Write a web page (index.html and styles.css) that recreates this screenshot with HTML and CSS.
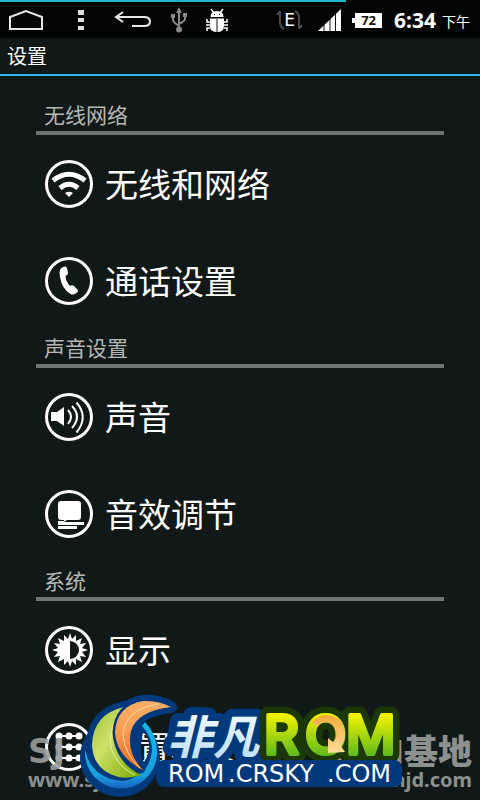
FILE: index.html
```html
<!DOCTYPE html>
<html lang="zh-CN">
<head>
    <meta charset="UTF-8">
    <meta name="viewport" content="width=device-width, initial-scale=1.0">
    <title>设置</title>
    <link rel="stylesheet" href="styles.css">
</head>
<body>
    <div class="progress"></div>
    <div class="status-bar">
        <button class="nav-btn home" aria-label="Home">
            <svg width="36" height="22" viewBox="0 0 36 22"><path d="M2 20V8L18 2l16 6v12z" fill="none" stroke="#e8e8e8" stroke-width="2"/></svg>
        </button>
        <button class="nav-btn menu" aria-label="Menu">
            <svg width="6" height="22" viewBox="0 0 6 22"><path d="M0 1h6v5H0zM0 9h6v4H0zM0 17h6v4H0z" fill="#e0e0e0"/></svg>
        </button>
        <button class="nav-btn back" aria-label="Back">
            <svg width="38" height="18" viewBox="0 0 38 18"><path d="M9 1L2 6l7 5M2 6h28q6 0 6 4.500T30 15H18" fill="none" stroke="#e8e8e8" stroke-width="2"/></svg>
        </button>
        <svg class="usb" width="18" height="26" viewBox="0 0 18 26">
            <g fill="none" stroke="#8a8a8a" stroke-width="2"><path d="M9 5v17M3 10v3q0 2 6 6M15 8v4q0 2-6 5"/></g>
            <path d="M9 0l3 6H6zM1 7h4v4H1zM13 6h4v4h-4z" fill="#8a8a8a"/><circle cx="9" cy="22.500" r="3" fill="#8a8a8a"/>
        </svg>
        <svg class="bug" width="24" height="25" viewBox="0 0 24 25">
            <path d="M5.500 9q0-6 6.500-6t6.500 6zM5 10.500h14v7.500q0 6-7 6t-7-6z" fill="#fff"/>
            <path d="M6 1l3 4M18 1l-3 4M5 14H2v-3M19 14h3v-3M5 17H1M19 17h4M5 20H2v3M19 20h3v3" fill="none" stroke="#fff" stroke-width="1.500"/>
            <path d="M12 11v13" stroke="#111"/><path d="M9 6h1v1H9zM14 6h1v1h-1z" fill="#000"/>
        </svg>
        <div class="spacer"></div>
        <div class="network">
            <svg width="27" height="22" viewBox="0 0 27 22"><g fill="none" stroke="#4c4c4c" stroke-width="2"><path d="M8 20q-4-2-4-7V3M1 6l3-4M19 2q4 2 4 7v10M26 16l-3 4"/></g></svg>
            <span>E</span>
        </div>
        <svg class="signal" width="24" height="22" viewBox="0 0 24 22"><path d="M0 22L23 0v22z" fill="#fff"/><path d="M6 14v8M12 9v13M17.500 4v18" stroke="#111"/></svg>
        <div class="battery">72</div>
        <div class="clock">6:34</div>
        <div class="ampm">下午</div>
    </div>

    <h1>设置</h1>

    <main>
        <section>
            <h2>无线网络</h2>
            <a class="item" href="#wireless">
                <svg class="icon" viewBox="0 0 48 48">
                    <circle class="ring" cx="24" cy="24" r="22.500"/>
                    <path d="M8 20.500Q24 8 40 20.500" class="line w5"/>
                    <path d="M15 28q9-7.500 18 0" class="line w5"/>
                    <path d="M20 33q4-2.500 8 0l-4 4z" class="fill"/>
                </svg>
                <span>无线和网络</span>
            </a>
            <a class="item" href="#call">
                <svg class="icon" viewBox="0 0 48 48">
                    <circle class="ring" cx="24" cy="24" r="22.500"/>
                    <path d="M15 13q1-3 5-3.500 2 0 2.500 3.500l.5 3q0 2-2.500 3 0 5 4.500 10 2-1.500 4 0l3 3q2 2 0 3.500-3 3-6.500 1.500Q17 32 15 20q-1-4 0-7z" class="fill"/>
                </svg>
                <span>通话设置</span>
            </a>
        </section>

        <section>
            <h2>声音设置</h2>
            <a class="item" href="#sound">
                <svg class="icon" viewBox="0 0 48 48">
                    <circle class="ring" cx="24" cy="24" r="22.500"/>
                    <path d="M6 19h6l7-5v19l-7-5H6z" class="fill"/>
                    <path d="M23 17q6 6.500 0 14M27 13q10 10.500 0 22M31.500 9.500q12.500 14.500 0 30" class="line w2"/>
                </svg>
                <span>声音</span>
            </a>
            <a class="item" href="#effects">
                <svg class="icon" viewBox="0 0 48 48">
                    <circle class="ring" cx="24" cy="24" r="22.500"/>
                    <path d="M16 11h17q3 0 3 3v13q0 3-3 3H22l-3 2v-2h-3q-3 0-3-3V14q0-3 3-3z" class="fill"/>
                    <path d="M13 31h6v1h20v3H13zM13 36h19v3H13z" class="fill"/>
                </svg>
                <span>音效调节</span>
            </a>
        </section>

        <section>
            <h2>系统</h2>
            <a class="item" href="#display">
                <svg class="icon" viewBox="0 0 48 48">
                    <circle class="ring" cx="24" cy="24" r="22.500"/>
                    <path d="M25 7l2 6 4-4 0 6 6-3-2 6 6-1-4 5 6 2-6 2 4 5-6-1 2 6-6-3 0 6-4-4-2 6-2-6-4 4 0-6-6 3 2-6-6 1 4-5-6-2 6-2-4-5 6 1-2-6 6 3 0-6 4 4z" class="fill"/>
                    <path d="M25 15a9 9 0 0 1 0 18z" class="cut"/>
                </svg>
                <span>显示</span>
            </a>
            <a class="item" href="#security">
                <svg class="icon" viewBox="0 0 48 48">
                    <circle class="ring" cx="24" cy="24" r="22.500"/>
                    <path d="M35 13H14v11h20M14 24v11h21" class="line w2"/>
                    <g class="fill">
                        <circle cx="14" cy="13" r="3.500"/><circle cx="24" cy="13" r="3.500"/><circle cx="34" cy="13" r="3.500"/>
                        <circle cx="14" cy="24" r="3.500"/><circle cx="24" cy="24" r="3.500"/><circle cx="34" cy="24" r="3.500"/>
                        <circle cx="14" cy="35" r="3.500"/><circle cx="24" cy="35" r="3.500"/><circle cx="34" cy="35" r="3.500"/>
                    </g>
                </svg>
                <span>位置和安全</span>
            </a>
        </section>
    </main>

    <!-- site watermarks over the list -->
    <div class="mark mark-left"><b>SJ</b><span>www.sj.com</span></div>
    <div class="mark mark-right"><b>ROM基地</b><span>www.romjd.com</span></div>

    <svg class="logo" width="330" height="110" viewBox="80 690 330 110">
        <defs>
            <linearGradient id="green" x1="0" y1="0" x2="1" y2="1"><stop offset="0" stop-color="#9cc23a"/><stop offset=".4" stop-color="#cfe069"/><stop offset="1" stop-color="#75a900"/></linearGradient>
            <linearGradient id="orange" x1="0" y1="0" x2="0" y2="1"><stop offset="0" stop-color="#f9ad66"/><stop offset=".4" stop-color="#f8a055"/><stop offset="1" stop-color="#e8661a"/></linearGradient>
            <linearGradient id="blue" x1="0" y1="0" x2="0" y2="1"><stop offset="0" stop-color="#12b5e8"/><stop offset=".8" stop-color="#1aa0dc"/><stop offset="1" stop-color="#1560c0"/></linearGradient>
            <linearGradient id="ice" x1="0" y1="0" x2="0" y2="1"><stop offset="0" stop-color="#fff"/><stop offset="1" stop-color="#b5dcf5"/></linearGradient>
            <linearGradient id="lime" gradientUnits="userSpaceOnUse" x1="0" y1="715" x2="0" y2="758"><stop offset="0" stop-color="#f2f200"/><stop offset="1" stop-color="#55b81e"/></linearGradient>
            <linearGradient id="gold" x1="0" y1="0" x2="0" y2="1"><stop offset="0" stop-color="#f6a93a"/><stop offset="1" stop-color="#ffdc9c"/></linearGradient>
        </defs>
        <g class="han">
            <text x="167" y="754" stroke="#003a7c" stroke-width="16">非凡</text>
            <text x="167" y="754" fill="url(#ice)">非凡</text>
        </g>
        <g class="rom">
            <g stroke="#1c3808" stroke-width="17"><text x="264" y="754">R</text><text x="305" y="754">O</text><text x="346" y="754">M</text></g>
            <g fill="url(#lime)" stroke="url(#lime)" stroke-width="4"><text x="264" y="754">R</text><text x="305" y="754">O</text><text x="346" y="754">M</text></g>
        </g>
        <path d="M312 722q6-8 16-7 17 3 17 19 0 7-4 12l4 6-17 1 0-15 5 4q5-5 3-11-3-10-13-9-4 1-5 5z" fill="url(#gold)"/>
        <rect x="156" y="760" width="246" height="27" rx="8" fill="#003a7c"/>
        <g class="site"><text x="168" y="782">ROM</text><text x="228" y="782">.CRSKY</text><text x="327" y="782">.COM</text></g>

        <path d="M80 757a40 40 0 0 1 80 0a40 40 0 0 1-80 0zM143 732q7 6 6 18-2 9-6 13-4-13 0-31z" fill="#003a7c" fill-rule="evenodd"/>
        <g fill="#003a7c" stroke="#003a7c" stroke-width="12" stroke-linejoin="round">
            <path d="M124 707Q93 714 92 745q1 25 26 32 12 2 23-2-22-11-27-33-2-20 10-35z"/>
            <path d="M171 707q-13-7-28-6-27 5-28 32 2 24 29 38-18-18-13-40 6-20 40-24z"/>
        </g>
        <path d="M145 722q13 13 12 33a36 36 0 0 1-72-5q7 29 38 31 26-5 29-30 0-15-10-25z" fill="url(#blue)"/>
        <path d="M124 707Q93 714 92 745q1 25 26 32 12 2 23-2-22-11-27-33-2-20 10-35z" fill="url(#green)"/>
        <path d="M117 715q-12 27-2 42 8 13 20 18" fill="none" stroke="#e6f0a8"/>
        <path d="M171 707q-13-7-28-6-27 5-28 32 2 24 29 38-18-18-13-40 6-20 40-24z" fill="url(#orange)" stroke="#003a7c" stroke-width="5" paint-order="stroke"/>
        <path d="M158 704q-33 5-35 31 1 18 17 33" fill="none" stroke="#ffd9a8"/>
    </svg>
</body>
</html>
```
FILE: styles.css
```css
* { box-sizing: border-box; }

body {
    position: relative;
    margin: 0;
    min-height: 100vh;
    background: #111918;
    color: #fff;
    font-family: "Noto Sans", "Noto Sans CJK SC", sans-serif;
    overflow: hidden;
}

.progress {
    position: absolute;
    top: 0;
    left: 0;
    width: 72%;
    height: 2px;
    background: #1cb8c6;
}

.status-bar {
    display: flex;
    align-items: center;
    height: 38px;
    padding: 2px 10px 0 8px;
    background: #030505;
}

.status-bar svg { display: block; flex: none; }

.nav-btn {
    flex: none;
    padding: 0;
    border: 0;
    background: none;
}

.menu { margin-left: 34px; }
.back { margin-left: 30px; }
.usb { margin-left: 18px; }
.bug { margin-left: 17px; }
.spacer { flex: 1; }

.network {
    display: grid;
    place-items: center;
    margin-right: 15px;
}

.network > * { grid-area: 1 / 1; }

.network span {
    font-family: "DejaVu Sans", sans-serif;
    font-size: 17px;
    line-height: 20px;
}

.battery {
    position: relative;
    width: 27px;
    height: 15px;
    margin-left: 13px;
    background: #fff;
    color: #111;
    font-size: 13px;
    font-weight: bold;
    line-height: 15px;
    text-align: center;
}

.battery::before {
    content: "";
    position: absolute;
    left: -3px;
    top: 5px;
    width: 3px;
    height: 5px;
    background: #fff;
}

.clock {
    margin-left: 12px;
    font-size: 21px;
    font-weight: bold;
    line-height: 34px;
}

.ampm {
    margin-left: 6px;
    padding-top: 3px;
    font-size: 14px;
    line-height: 34px;
}

h1 {
    margin: 0;
    height: 38px;
    padding-left: 7px;
    border-bottom: 2px solid #33b5e5;
    font-size: 20px;
    font-weight: normal;
    line-height: 38px;
}

main { padding: 20px 36px 0; }

h2 {
    margin: 0;
    height: 39px;
    padding-left: 8px;
    border-bottom: 4px solid #6c7573;
    color: #b4b7b5;
    font-size: 21px;
    font-weight: normal;
    line-height: 38px;
}

.item {
    display: flex;
    align-items: center;
    height: 97px;
    padding-left: 9px;
    gap: 12px;
    color: #fff;
    font-size: 33px;
    line-height: 48px;
    text-decoration: none;
}

.item span { padding-top: 3px; }

.icon { width: 48px; height: 48px; flex: none; }
.ring { fill: none; stroke: #fff; stroke-width: 3; }
.fill { fill: #fff; }
.cut { fill: #111918; }
.line { fill: none; stroke: #fff; }
.w2 { stroke-width: 2; }
.w5 { stroke-width: 5; }

.mark {
    position: absolute;
    bottom: 8px;
    color: #9a9e9d;
    font-weight: bold;
    opacity: .9;
}

.mark b, .mark span { display: block; }
.mark b { font-size: 34px; line-height: 34px; }
.mark span { font-size: 20px; line-height: 24px; }
.mark-left { left: 28px; }
.mark-left b { font-family: "DejaVu Sans", sans-serif; }
.mark-right { right: 8px; text-align: right; }

.logo {
    position: absolute;
    left: 80px;
    bottom: 0;
}

.logo text { stroke-linejoin: round; }

.han {
    font-family: "Noto Sans CJK SC", sans-serif;
    font-size: 46px;
    font-weight: bold;
    font-style: italic;
}

.rom {
    font-family: Inter, sans-serif;
    font-size: 54px;
    font-weight: 500;
}

.site {
    fill: #fff;
    font-family: "DejaVu Sans", sans-serif;
    font-size: 24px;
}
```
